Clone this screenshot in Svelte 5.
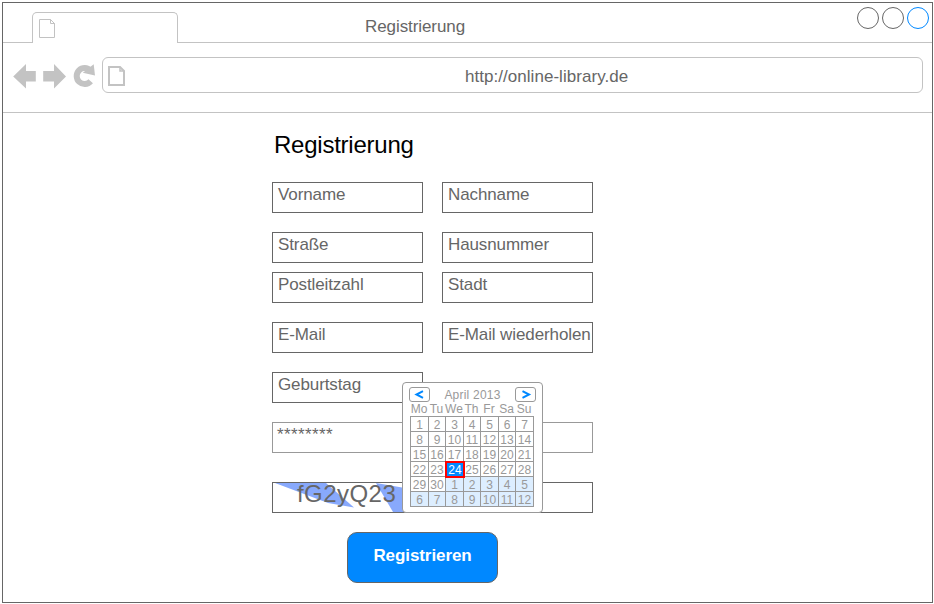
<script>
  const rows = [
    { gap: 19, fields: ['Vorname', 'Nachname'] },
    { gap: 9, fields: ['Straße', 'Hausnummer'] },
    { gap: 19, fields: ['Postleitzahl', 'Stadt'] },
    { gap: 19, fields: ['E-Mail', 'E-Mail wiederholen'] },
    { gap: 19, fields: ['Geburtstag'] }
  ];
  const weekdays = ['Mo', 'Tu', 'We', 'Th', 'Fr', 'Sa', 'Su'];
  const days = Array.from({ length: 42 }, (_, i) => ({
    label: i < 30 ? i + 1 : i - 29,
    next: i >= 30,
    selected: i === 23
  }));
</script>

<div class="page">
  <div class="window">
    <header class="tabs">
      <div class="tab">
        <svg width="18" height="20" viewBox="0 0 18 20" fill="none" stroke="#c2c2c2">
          <path d="M.5 .5H11.500L15.500 4.500V18.500H.5ZM11.500 .5V4.500H15.500M11.500 .5L15.500 4.500" />
        </svg>
      </div>
      <div class="title">Registrierung</div>
      <div class="controls"><i></i><i></i><i class="blue"></i></div>
    </header>

    <nav class="toolbar">
      <svg class="nav" width="86" height="28" viewBox="0 0 86 28" fill="#c3c3c3">
        <path d="M.2 14.500 13 2V9H22.800V19.500H13V26.500Z" />
        <path d="M53 14.500 41 2V9H30.200V19.500H41V26.500Z" />
        <path d="M77.700 19.300A8 8 0 1 1 77.500 8.500" fill="none" stroke="#c3c3c3" stroke-width="6" />
        <path d="M80.700 2.200 82 13.600 69.800 10.800Z" />
      </svg>
      <div class="address">
        <svg width="20" height="22" viewBox="0 0 20 22" fill="none" stroke="#c3c3c3" stroke-width="2">
          <path d="M2 2H13L17 6V20H2Z" /><path d="M13 2V6H17" stroke-width="1.500" />
        </svg>
        <span>http://online-library.de</span>
      </div>
    </nav>

    <main>
      <h1>Registrierung</h1>
      {#each rows as row}
        <div class="row" style="margin-bottom:{row.gap}px">
          {#each row.fields as f}
            <div class="field">{f}</div>
          {/each}
        </div>
      {/each}
      <div class="field wide password">********</div>
      <div class="field wide captcha">
        <svg width="319" height="29" viewBox="0 0 319 29" fill="#88a9fc">
          <path d="M2 0H53L81 24.500L55 20Z" /><path d="M103 0L132 5V29H120Z" />
        </svg>
        <span>fG2yQ23</span>
      </div>
      <button>Registrieren</button>

      <div class="calendar">
        <div class="cal-head">
          <div class="arrow"><svg width="19" height="13"><path d="M13 3.200 6.500 6.500 13 9.800" /></svg></div>
          <span>April 2013</span>
          <div class="arrow"><svg width="19" height="13"><path d="M6.500 3.200 13 6.500 6.500 9.800" /></svg></div>
        </div>
        <div class="weekdays">{#each weekdays as d}<span>{d}</span>{/each}</div>
        <div class="days">
          {#each days as d}
            <div class="day" class:next={d.next} class:selected={d.selected}>{d.label}</div>
          {/each}
        </div>
      </div>
    </main>
  </div>
</div>

<style>
  :global(body) { background: #fff; overflow: hidden; }
  .page {
    width: 934px; height: 604px; box-sizing: border-box; padding: 2px 1px 1px 2px;
    font-family: "Liberation Sans", Arial, sans-serif; font-size: 17px; line-height: 20px; color: #666;
  }
  .page * { box-sizing: border-box; }
  svg { display: block; flex: none; }
  .window { width: 931px; height: 601px; border: 1px solid #666; }
  .tabs {
    height: 40px; display: flex; align-items: flex-start;
    background: linear-gradient(#c3c3c3, #c3c3c3) 0 100% / 100% 1px no-repeat;
  }
  .tab {
    margin: 9px 0 0 29px; width: 146px; height: 31px; background: #fff;
    border: 1px solid #c3c3c3; border-bottom: 0; border-radius: 5px 5px 0 0; padding: 6px;
  }
  .title { margin: 14px 0 0 187px; width: 260px; letter-spacing: -.08px; }
  .controls { margin: 4px 0 0 auto; padding-right: 3px; display: flex; gap: 3px; }
  .controls i { width: 22px; height: 22px; border: 1px solid #666; border-radius: 50%; }
  .controls .blue { border-color: #08f; }
  .toolbar { height: 70px; border-bottom: 1px solid #c3c3c3; display: flex; padding: 14px 9px 0 10px; }
  .nav { margin: 5px 3px 0 0; }
  .address {
    flex: 1; height: 36px; border: 1px solid #c3c3c3; border-radius: 6px;
    display: flex; align-items: center; padding-left: 4px;
  }
  .address svg { margin-top: 1px; }
  .address span { margin-left: 338px; padding-top: 4px; letter-spacing: .04px; }
  main { position: relative; width: 321px; margin-left: 269px; padding-top: 17px; }
  h1 { margin: 0 0 22px 2px; font-size: 24px; line-height: 30px; height: 30px; font-weight: 400; color: #000; letter-spacing: -.24px; }
  .row { display: flex; gap: 19px; height: 31px; }
  .field { width: 151px; height: 31px; border: 1px solid #666; padding: 2px 0 0 5px; white-space: nowrap; letter-spacing: -.11px; }
  .wide { width: 321px; }
  .password { border-color: #999; margin-bottom: 29px; padding: 2px 0 0 4px; letter-spacing: .4px; }
  .captcha { display: grid; padding: 0; font-size: 24px; line-height: 22px; letter-spacing: .45px; }
  .captcha > * { grid-area: 1 / 1; }
  .captcha span { padding-left: 24px; }
  button {
    display: block; margin: 19px 0 0 75px; width: 151px; height: 51px; background: #08f; color: #fff;
    border: 1px solid #666; border-radius: 10px; font: bold 17px/20px "Liberation Sans", Arial, sans-serif; padding: 0 0 4px;
    letter-spacing: -.08px;
  }
  .calendar {
    position: absolute; left: 130px; top: 269px; width: 141px; height: 131px; background: #fff;
    border: 1px solid #999; border-radius: 4px; font-size: 12px; line-height: 14px; color: #999;
  }
  .cal-head { display: flex; justify-content: space-between; padding: 4px 6px 0; height: 19px; }
  .cal-head span { padding-top: 1px; letter-spacing: .22px; }
  .arrow { width: 21px; height: 15px; border: 1px solid #999; border-radius: 3px; }
  .arrow path { fill: none; stroke: #08f; stroke-width: 2; }
  .weekdays, .days { display: grid; grid-template-columns: 18px 17px 18px 17px 18px 17px 18px; text-align: center; }
  .weekdays { margin-left: 7px; height: 14px; }
  .weekdays span { display: flex; justify-content: center; }
  .days {
    margin-left: 7px; width: 124px; border: solid #999; border-width: 1px 0 0 1px;
    grid-auto-rows: 15px;
  }
  .day { border: solid #999; border-width: 0 1px 1px 0; line-height: 17px; height: 15px; display: flex; justify-content: center; }
  .next { background: #def; }
  .selected { background: #08f; color: #fff; outline: 2px solid #f00; outline-offset: -1px; border: 0; position: relative; }
</style>
